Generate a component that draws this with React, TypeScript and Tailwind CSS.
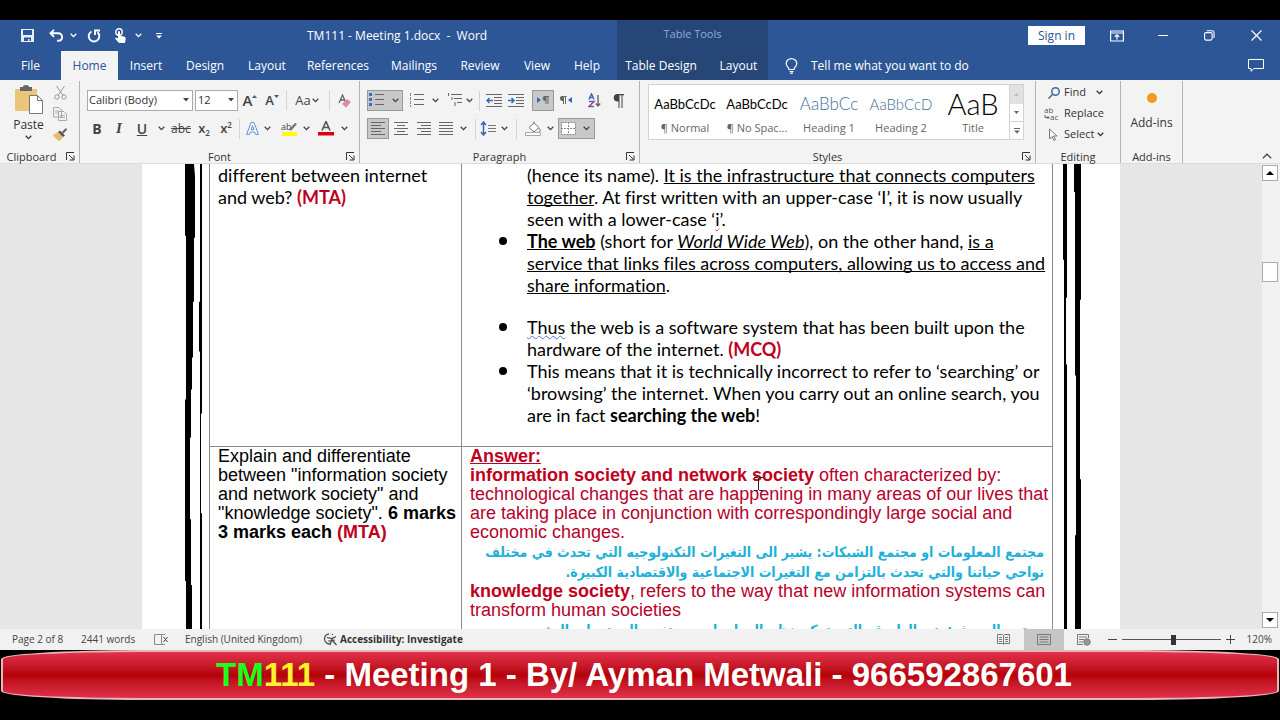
import type { ReactNode } from 'react';
import clsx from 'clsx';

const leftTabs = [
    { name: 'File', width: 'w-[61px]' },
    { name: 'Home', width: 'w-[57px]' },
    { name: 'Insert', width: 'w-14' },
    { name: 'Design', width: 'w-[62px]' },
    { name: 'Layout', width: 'w-[62px]' },
    { name: 'References', width: 'w-20' },
    { name: 'Mailings', width: 'w-[72px]' },
    { name: 'Review', width: 'w-15' },
    { name: 'View', width: 'w-[54px]' },
    { name: 'Help', width: 'w-[46px]' },
];

const styleItems = [
    { name: '¶ Normal', sample: 'AaBbCcDc', look: 'font-[Lato] text-[13px] text-black' },
    { name: '¶ No Spac...', sample: 'AaBbCcDc', look: 'font-[Lato] text-[13px] text-black' },
    { name: 'Heading 1', sample: 'AaBbCc', look: 'font-[Lato] font-light text-[17px] text-[#3f7099]' },
    { name: 'Heading 2', sample: 'AaBbCcD', look: 'font-[Lato] font-light text-[15px] text-[#3f7099]' },
    { name: 'Title', sample: 'AaB', look: 'font-[Lato] font-light text-[29px] text-black' },
];

function Chevron({ className = 'w-3' }: { className?: string }) {
    return (
        <span className={clsx('flex shrink-0 items-center justify-center', className)}>
            <svg width="7" height="5" viewBox="0 0 7 5" fill="none" stroke="currentColor" strokeWidth="1.3">
                <path d="M.7.8 3.5 3.6 6.3.8" />
            </svg>
        </span>
    );
}

function Caret() {
    return (
        <svg className="pointer-events-none absolute top-2 right-1" width="6" height="4" viewBox="0 0 6 4">
            <path d="M0 0h6L3 3.5z" fill="#444" />
        </svg>
    );
}

function Divider({ className }: { className?: string }) {
    return <span className={clsx('h-5 w-px shrink-0 bg-[#d4d4d4]', className)} />;
}

function Tool({ label, className, children }: { label: string; className?: string; children: ReactNode }) {
    return (
        <button type="button" aria-label={label} className={clsx('flex h-[21px] shrink-0 items-center justify-center', className)}>
            {children}
        </button>
    );
}

function Group({ title, launcher, className, children }: { title: string; launcher?: boolean; className?: string; children: ReactNode }) {
    return (
        <section className={clsx('relative flex shrink-0 flex-col border-r border-[#b4b4b4]', className)}>
            <div className="h-[70px] pt-0.5">{children}</div>
            <div className="text-center text-[11px] leading-3 text-[#333]">{title}</div>
            {launcher && (
                <button type="button" aria-label={`${title} settings`} className="absolute right-1 bottom-0.5">
                    <svg width="9" height="9" viewBox="0 0 9 9" fill="none" stroke="#333">
                        <path d="M.5 8V.5H8M3 3l4.5 4.5M8 3.500V8H3.500" />
                    </svg>
                </button>
            )}
        </section>
    );
}

// Horizontal rules used by the list and alignment icons: [x1, x2] per row
function Lines({ rows, step = 3, children, color = '#666' }: { rows: number[][]; step?: number; children?: ReactNode; color?: string }) {
    return (
        <svg width="16" height="16" viewBox="0 0 16 16" fill="none" stroke={color}>
            {rows.map(([a, b], i) => (
                <path key={i} d={`M${a} ${1.5 + i * step}H${b}`} />
            ))}
            {children}
        </svg>
    );
}

function TitleColumn() {
    return (
        <div className="flex w-[617px] shrink-0 flex-col">
            <div className="flex h-[31px] items-center">
                <div className="flex w-[307px] shrink-0 items-center pl-[21px]">
                    <button type="button" aria-label="Save" className="w-[28px]">
                        <svg width="13" height="13" viewBox="0 0 13 13">
                            <path d="M0 0h13v13H0z" fill="#e8eef7" />
                            <path d="M2 1h9v5H2zM3 8.500h7V12H8.500V10H7v2H3z" fill="#2c5696" />
                        </svg>
                    </button>
                    <button type="button" aria-label="Undo" className="w-4">
                        <svg width="15" height="13" viewBox="0 0 15 13" fill="none" stroke="#fff" strokeWidth="1.900">
                            <path d="M5 .8 1.500 4.300 5 7.800M1.500 4.300H9c5.500 0 5.500 7.500 0 7.500H8" />
                        </svg>
                    </button>
                    <Chevron className="w-4 text-white" />
                    <button type="button" aria-label="Redo" className="ml-1.5 w-[27px]">
                        <svg width="14" height="14" viewBox="0 0 14 14" fill="none" stroke="#fff" strokeWidth="1.900">
                            <path d="M4.500 2.500a5.300 5.300 0 1 0 6 .7M8 6V1.500h5" />
                        </svg>
                    </button>
                    <button type="button" aria-label="Touch mode" className="w-4">
                        <svg width="13" height="15" viewBox="0 0 13 15">
                            <circle cx="5" cy="4" r="3.200" fill="none" stroke="#fff" strokeWidth="1.400" />
                            <path d="M4 3.500q1-1.200 2 0v4l4.500 1.200q1.500.5 1.200 2L11 15H5L1 10.500q.5-1.500 3 0z" fill="#fff" />
                        </svg>
                    </button>
                    <Chevron className="w-4 text-white" />
                    <button type="button" aria-label="Customize toolbar" className="ml-2.5 text-white">
                        <svg width="6" height="6" viewBox="0 0 6 6" fill="currentColor">
                            <path d="M0 0h6v1H0zM0 2.500h6L3 5.500z" />
                        </svg>
                    </button>
                </div>
                <h1 className="whitespace-pre text-xs text-white">{'TM111 - Meeting 1.docx  -  Word'}</h1>
            </div>
            <nav className="flex h-[29px]">
                {leftTabs.map((tab) => (
                    <button
                        key={tab.name}
                        type="button"
                        className={clsx(
                            'flex shrink-0 items-center justify-center text-xs font-medium',
                            tab.width,
                            tab.name === 'Home' ? 'bg-[#f3f3f3] text-[#2c5696]' : 'text-white'
                        )}
                    >
                        {tab.name}
                    </button>
                ))}
            </nav>
        </div>
    );
}

function Header() {
    return (
        <header className="flex h-[60px] shrink-0 bg-[#2c5696]">
            <TitleColumn />
            <div className="flex w-[151px] shrink-0 flex-col bg-[#254677]">
                <div className="h-[31px] text-center text-[11px] leading-7 text-[#93add2]">Table Tools</div>
                <div className="flex h-[29px] text-xs font-medium whitespace-nowrap text-white">
                    <button type="button" className="w-[88px]">Table Design</button>
                    <button type="button" className="flex-1 pl-1">Layout</button>
                </div>
            </div>
            <div className="flex flex-1 flex-col">
                <div className="flex h-[31px] items-center justify-end text-white">
                    <button type="button" className="mr-[25px] h-[19px] w-[57px] bg-white text-xs leading-[19px] text-[#2c5696]">Sign in</button>
                    <button type="button" aria-label="Ribbon display options" className="mr-[34px]">
                        <svg width="14" height="12" viewBox="0 0 14 12" fill="none" stroke="#fff" strokeWidth="1.200">
                            <path d="M.6 1h12.800v10H.6zM.6 3h12.800M7 9.500V5M4.800 6.800 7 4.800l2.200 2" />
                        </svg>
                    </button>
                    <button type="button" aria-label="Minimize" className="mr-9">
                        <svg width="10" height="10" viewBox="0 0 10 10" stroke="#fff"><path d="M0 4.500h10" /></svg>
                    </button>
                    <button type="button" aria-label="Restore" className="mr-9">
                        <svg width="11" height="11" viewBox="0 0 11 11" fill="none" stroke="#fff" strokeWidth="1.100">
                            <rect x=".6" y="2.600" width="7.500" height="7.500" rx="1.500" />
                            <path d="M2.800.8h5.200q2 0 2 2V8" />
                        </svg>
                    </button>
                    <button type="button" aria-label="Close" className="mr-[18px]">
                        <svg width="11" height="11" viewBox="0 0 11 11" stroke="#fff" strokeWidth="1.200"><path d="m.5.5 10 10m0-10-10 10" /></svg>
                    </button>
                </div>
                <div className="flex h-[29px] items-center pl-[17px] text-white">
                    <svg width="13" height="16" viewBox="0 0 13 16" fill="none" stroke="#fff" strokeWidth="1.200">
                        <path d="M4 11.500C4 9 1.200 8.500 1.200 5.500a5.300 4.900 0 0 1 10.600 0C11.800 8.500 9 9 9 11.500zM4.500 13.500h4M5 15.200h3" />
                    </svg>
                    <button type="button" className="ml-[13px] text-xs">Tell me what you want to do</button>
                    <button type="button" aria-label="Comments" className="mr-4 ml-auto">
                        <svg width="16" height="13" viewBox="0 0 16 13" fill="none" stroke="#fff">
                            <path d="M.5.5h15v9H6l-3 2.800V9.500H.5z" />
                        </svg>
                    </button>
                </div>
            </div>
        </header>
    );
}

function ClipboardGroup() {
    return (
        <Group title="Clipboard" launcher className="w-20 [&>div]:pr-4">
            <div className="flex">
                <button type="button" className="flex w-[53px] flex-col items-center pt-0.5 pl-1 text-xs text-[#333]">
                    <svg width="28" height="30" viewBox="0 0 28 30">
                        <path d="M0 4h22v22H0z" fill="#ecc678" />
                        <path d="M5 2h3q0-2 3-2t3 2h3v4H5z" fill="#666" />
                        <path d="M14.500 10.500h8l5 5v13h-13z" fill="#fff" stroke="#777" />
                        <path d="M22.500 10.500v5h5" fill="none" stroke="#777" />
                    </svg>
                    <span className="leading-5">Paste</span>
                    <Chevron />
                </button>
                <div className="-mr-3 -mt-px flex flex-col">
                    <Tool label="Cut">
                        <svg width="13" height="14" viewBox="0 0 13 14" fill="none" stroke="#999">
                            <path d="M2.500 0 9 9.500M10.500 0 4 9.500" />
                            <circle cx="3" cy="11" r="2.200" />
                            <circle cx="10" cy="11" r="2.200" />
                        </svg>
                    </Tool>
                    <Tool label="Copy">
                        <svg width="14" height="14" viewBox="0 0 14 14" fill="#f3f3f3" stroke="#aaa">
                            <path d="M.5.500H6L8.500 3v7h-8zM5.500 4.500H11L13.500 7v6.500h-8zM2 4h4M2 6h3M7 8.500h5M7 10.500h5" />
                        </svg>
                    </Tool>
                    <Tool label="Format painter">
                        <svg width="14" height="13" viewBox="0 0 14 13">
                            <path d="m0 7 5-3 5 5-3 4Q3 12 0 7z" fill="#e5bd6e" />
                            <path d="m5 4 2-1.500 5 5L10 9zM9 4l4-4 1 1.500-3.500 4z" fill="#555" />
                        </svg>
                    </Tool>
                </div>
            </div>
        </Group>
    );
}

function FontGroup() {
    return (
        <Group title="Font" launcher className="w-70">
            <div className="flex h-[35px] items-center pl-[7px] text-[#444]">
                <div className="relative mr-0.5">
                    <select aria-label="Font" className="block h-[21px] w-[106px] appearance-none border border-[#ababab] bg-white pl-px text-[11px] text-[#333]">
                        <option>Calibri (Body)</option>
                    </select>
                    <Caret />
                </div>
                <div className="relative">
                    <select aria-label="Font size" className="block h-[21px] w-[43px] appearance-none border border-[#ababab] bg-white pl-0.5 text-[11px] text-[#333]">
                        <option>12</option>
                    </select>
                    <Caret />
                </div>
                <Tool label="Grow font" className="w-6 text-[15px] font-semibold">
                    A<svg className="mb-2" width="5" height="4" viewBox="0 0 5 4"><path d="m0 3 2.500-3L5 3z" fill="#35618e" /></svg>
                </Tool>
                <Tool label="Shrink font" className="w-5 text-[13px] font-semibold">
                    A<svg className="mb-2" width="5" height="4" viewBox="0 0 5 4"><path d="m0 0 2.500 3L5 0z" fill="#35618e" /></svg>
                </Tool>
                <Divider className="ml-1" />
                <Tool label="Change case" className="ml-1 w-[34px] text-[13px]">Aa<Chevron className="w-2.5" /></Tool>
                <Divider className="mx-1" />
                <Tool label="Clear formatting" className="w-5">
                    <svg width="13" height="14" viewBox="0 0 13 14">
                        <path d="M1 9 4.500 1 8 9M2.500 6h4" fill="none" stroke="#666" strokeWidth="1.300" />
                        <path d="m4 10 5-5 4 3-5 5.500z" fill="#e0889c" />
                    </svg>
                </Tool>
            </div>
            <div className="flex h-[21px] items-center pl-1.5 text-[#444]">
                <Tool label="Bold" className="w-[22px] text-sm font-bold">B</Tool>
                <Tool label="Italic" className="w-[22px] font-['Liberation_Serif'] text-[15px] font-semibold italic">I</Tool>
                <Tool label="Underline" className="w-6 text-sm font-semibold underline">U</Tool>
                <Chevron className="mx-1" />
                <Tool label="Strikethrough" className="w-6 text-xs line-through">abc</Tool>
                <Tool label="Subscript" className="w-[22px] text-[13px] font-semibold">x<span className="mt-2 text-[8px]">2</span></Tool>
                <Tool label="Superscript" className="w-[22px] text-[13px] font-semibold">x<span className="mb-2 text-[8px]">2</span></Tool>
                <Divider className="ml-0.5" />
                <Tool label="Text effects" className="w-6">
                    <svg width="13" height="13" viewBox="0 0 13 13" fill="#fff" stroke="#5b8fd0" strokeLinejoin="round">
                        <path d="M5 .6h3l4.400 11.800H9.600L8.700 10H4.300l-.9 2.400H.6zM6.500 3.500 5 7.700h3z" />
                    </svg>
                </Tool>
                <Chevron className="mr-1" />
                <Tool label="Highlight" className="w-7">
                    <svg width="17" height="17" viewBox="0 0 17 17">
                        <path d="M1 12h15v4H1z" fill="#ff0" />
                        <text x="0" y="10" fontSize="9" fill="#444">ab</text>
                        <path d="m8 9 6-6 2 1-6 7z" fill="#777" />
                    </svg>
                </Tool>
                <Chevron className="mr-1" />
                <Tool label="Font color" className="w-6">
                    <svg width="16" height="15" viewBox="0 0 16 15">
                        <path d="M4 9.500 8 .5l4 9M5.500 6.500h5" fill="none" stroke="#555" strokeWidth="1.600" />
                        <path d="M0 11h16v3.500H0z" fill="#d8000c" />
                    </svg>
                </Tool>
                <Chevron />
            </div>
        </Group>
    );
}

function ParagraphGroup() {
    const pressed = 'border border-[#999] bg-[#c8c8c8]';
    return (
        <Group title="Paragraph" launcher className="w-70">
            <div className="flex h-[35px] items-center pl-[7px] text-[#444]">
                <Tool label="Bullets" className={clsx('w-9', pressed)}>
                    <Lines step={5} rows={[[6, 15], [6, 15], [6, 15]]}>
                        <path d="M0 1.500h3M0 6.500h3M0 11.500h3" stroke="#3b6fb0" strokeWidth="3" />
                    </Lines>
                    <Chevron className="ml-1 w-3" />
                </Tool>
                <Tool label="Numbering" className="ml-1 w-9">
                    <Lines step={5} rows={[[5, 15], [5, 15], [5, 15]]}>
                        <path d="M1.500 0v14" stroke="#888" strokeDasharray="3 1" />
                    </Lines>
                    <Chevron className="ml-1 w-3" />
                </Tool>
                <Tool label="Multilevel list" className="w-9">
                    <Lines step={4} rows={[[4, 15], [7, 15], [10, 15]]}>
                        <path d="M1.500 0v3M5 4v3M8 9v4" />
                    </Lines>
                    <Chevron className="w-3" />
                </Tool>
                <Divider />
                <Tool label="Decrease indent" className="ml-1.5 w-4">
                    <Lines rows={[[0, 16], [8, 16], [8, 16], [8, 16], [0, 16]]}>
                        <path d="M7 7.500H1M3.500 5 1 7.500 3.500 10" stroke="#2f6cb3" strokeWidth="1.500" />
                    </Lines>
                </Tool>
                <Tool label="Increase indent" className="ml-1.5 w-4">
                    <Lines rows={[[0, 16], [8, 16], [8, 16], [8, 16], [0, 16]]}>
                        <path d="M0 7.500h6M3.500 5 6 7.500 3.500 10" stroke="#2f6cb3" strokeWidth="1.500" />
                    </Lines>
                </Tool>
                <Tool label="Left to right" className={clsx('ml-2 w-[22px]', pressed)}>
                    <svg width="12" height="9" viewBox="0 0 12 9">
                        <path d="M0 1v6l4-3z" fill="#2f6cb3" />
                        <path d="M8 0h4v1h-.5v7h-1V1H9.500v7h-1V5a2.500 2.500 0 0 1-.5-5" fill="#666" />
                    </svg>
                </Tool>
                <Tool label="Right to left" className="ml-0.5 w-5">
                    <svg width="12" height="9" viewBox="0 0 12 9">
                        <path d="M12 1v6L8 4z" fill="#2f6cb3" />
                        <path d="M2 0h4.500v1H6v7H5V1H4v7H3V5a2.500 2.500 0 0 1-1-5" fill="#666" />
                    </svg>
                </Tool>
                <Tool label="Sort" className="ml-2 w-5">
                    <svg width="13" height="15" viewBox="0 0 13 15" fill="none" strokeWidth="1.400">
                        <path d="M1 6.500 3.500.8 6 6.500M2 4.500h3" stroke="#2f6cb3" />
                        <path d="M1 8.500h5l-5 5h5" stroke="#8a45a8" />
                        <path d="M10 2v11M7.800 10.500 10 13l2.200-2.500" stroke="#666" />
                    </svg>
                </Tool>
                <Tool label="Show marks" className="ml-1 w-5">
                    <svg width="11" height="14" viewBox="0 0 11 14" fill="#444">
                        <path d="M4.500 0H11v1.200H9.500V14h-1V1.200h-2V14h-1V7.500h-1a3.700 3.700 0 0 1 0-7.500" />
                    </svg>
                </Tool>
            </div>
            <div className="flex h-[21px] items-center pl-[7px] text-[#444]">
                <Tool label="Align left" className={clsx('w-[22px]', pressed)}>
                    <Lines rows={[[1, 15], [1, 11], [1, 15], [1, 11], [1, 15]]} />
                </Tool>
                <Tool label="Center" className="w-6">
                    <Lines rows={[[1, 15], [4, 12], [1, 15], [4, 12], [1, 15]]} />
                </Tool>
                <Tool label="Align right" className="w-[22px]">
                    <Lines rows={[[1, 15], [5, 15], [1, 15], [5, 15], [1, 15]]} />
                </Tool>
                <Tool label="Justify" className="w-[22px]">
                    <Lines rows={[[1, 15], [1, 15], [1, 15], [1, 15], [1, 15]]} />
                </Tool>
                <Chevron />
                <Divider className="ml-1.5" />
                <Tool label="Line spacing" className="ml-0.5 w-5">
                    <svg width="16" height="15" viewBox="0 0 16 15" fill="none">
                        <path d="M3.500 1v13M1 4l2.500-3L6 4M1 11l2.500 3L6 11" stroke="#2f6cb3" strokeWidth="1.500" />
                        <path d="M8 4.500h8M8 7.500h8M8 10.500h8" stroke="#777" />
                    </svg>
                </Tool>
                <Chevron />
                <Divider className="ml-1.5" />
                <Tool label="Shading" className="ml-1.5 w-5">
                    <svg width="17" height="15" viewBox="0 0 17 15" fill="#fff" stroke="#777">
                        <path d="M4 6.500 9 2l5 4.500-5 4.500zM9 2V.5M13.500 7q3 1.500 1 4" />
                        <path d="M.5 11.500h15v3H.5z" stroke="#aaa" />
                    </svg>
                </Tool>
                <Chevron className="mx-1" />
                <Tool label="Borders" className={clsx('w-[37px]', pressed)}>
                    <svg width="15" height="13" viewBox="0 0 15 13" fill="#fff" stroke="#888">
                        <rect x=".5" y=".5" width="14" height="12" strokeDasharray="2 1" />
                        <path d="M7.500 0v13M0 6.500h15" strokeDasharray="2 1" />
                    </svg>
                    <Chevron className="ml-1 w-3" />
                </Tool>
            </div>
        </Group>
    );
}

function StylesGroup() {
    return (
        <Group title="Styles" launcher className="w-99 [&>div]:pr-5">
            <div className="mt-px ml-2 flex h-14 w-[376px] border border-[#d2d2d2] bg-white">
                {styleItems.map((item) => (
                    <button key={item.name} type="button" className="w-18 shrink-0 overflow-hidden px-1">
                        <span className={clsx('flex h-8 items-center justify-center overflow-hidden pt-1 leading-7', item.look)}>{item.sample}</span>
                        <span className="block h-5 text-[11px] leading-5 whitespace-nowrap text-[#666]">{item.name}</span>
                    </button>
                ))}
                <div className="ml-auto flex w-3.5 shrink-0 flex-col border-l border-[#d2d2d2] text-[#666]">
                    <button type="button" aria-label="Previous styles" className="flex h-[19px] items-center justify-center bg-[#e1e1e1]">
                        <svg width="5" height="3" viewBox="0 0 5 3"><path d="m0 3 2.500-3L5 3z" fill="#bbb" /></svg>
                    </button>
                    <button type="button" aria-label="Next styles" className="flex h-[18px] items-center justify-center border-b border-[#d2d2d2]">
                        <svg width="5" height="3" viewBox="0 0 5 3"><path d="m0 0 2.500 3L5 0z" fill="currentColor" /></svg>
                    </button>
                    <button type="button" aria-label="All styles" className="flex flex-1 items-center justify-center">
                        <svg width="6" height="6" viewBox="0 0 6 6"><path d="M0 0h6v1H0zM0 2.500h6L3 5.500z" fill="currentColor" /></svg>
                    </button>
                </div>
            </div>
        </Group>
    );
}

function Ribbon() {
    return (
        <div className="flex h-[84px] shrink-0 border-b border-[#dcdcdc] bg-[#f3f3f3] pt-px">
            <ClipboardGroup />
            <FontGroup />
            <ParagraphGroup />
            <StylesGroup />
            <Group title="Editing" className="w-[85px]">
                <div className="-mt-px flex flex-col pl-3 text-[11px] text-[#333]">
                    <button type="button" className="flex h-[21px] items-center">
                        <svg width="12" height="12" viewBox="0 0 12 12" fill="none" stroke="#41699c" strokeWidth="1.500">
                            <circle cx="7.500" cy="4.500" r="3.700" />
                            <path d="M5 7 .5 11.500" />
                        </svg>
                        <span className="ml-1">Find</span>
                        <Chevron className="ml-2 w-3" />
                    </button>
                    <button type="button" className="flex h-[21px] items-center">
                        <svg className="-ml-1" width="16" height="18" viewBox="0 0 16 18">
                            <text x="0" y="8" fontSize="8" fill="#555">ab</text>
                            <text x="6" y="15" fontSize="8" fill="#555">ac</text>
                            <path d="M1 10v2.500h4M3.500 11 5 12.500 3.500 14" fill="none" stroke="#41699c" />
                        </svg>
                        <span className="ml-1">Replace</span>
                    </button>
                    <button type="button" className="flex h-[21px] items-center">
                        <svg width="12" height="13" viewBox="0 0 12 13" fill="#fff" stroke="#777">
                            <path d="M1.500 1v10L4 8.500l2 4 1.500-.8-2-3.700H9z" />
                        </svg>
                        <span className="ml-1">Select</span>
                        <Chevron />
                    </button>
                </div>
            </Group>
            <Group title="Add-ins" className="w-[62px]">
                <button type="button" className="flex w-full flex-col items-center pt-2.5 text-xs text-[#333]">
                    <span className="h-2.5 w-2.5 rounded-full bg-[#f09a1a]" />
                    <span className="mt-2.5 leading-5">Add-ins</span>
                </button>
            </Group>
            <button type="button" aria-label="Collapse the ribbon" className="mt-auto mr-2 mb-1 ml-auto">
                <svg width="10" height="6" viewBox="0 0 10 6" fill="none" stroke="#444" strokeWidth="1.200"><path d="m.8 5.200 4.200-4 4.200 4" /></svg>
            </button>
        </div>
    );
}

// Hand-drawn looking page border: one thick stroke and one thin stroke
function PageEdge({ flip, className }: { flip?: boolean; className: string }) {
    return (
        <svg className={clsx('absolute top-0 h-full w-5', className)} viewBox="0 0 20 466" preserveAspectRatio="none" aria-hidden="true">
            {flip ? (
                <path d="M3 0h3v134h-1v67h1v265H3V96H2V0zM13 0h8v24h-1v112h-1v180h1v150h-6V372h1V212h-1V28h-1z" />
            ) : (
                <path d="M2 0h8l1 12v62h-1v64h-1v56H8v32H7v48H6v82h1v66h1v44H2v-48H1v-36-146h1V72H1V0zM16 0h2v250h-1v100h1v116h-2V188h-1v-50h1z" />
            )}
        </svg>
    );
}

function BulletItem({ className, children }: { className?: string; children: ReactNode }) {
    return (
        <li className={clsx('flex', className)}>
            <span className="mt-[7px] mr-5 ml-[5px] h-2 w-2 shrink-0 rounded-full bg-black" />
            <p>{children}</p>
        </li>
    );
}

function DocTable() {
    return (
        <table className="mx-auto w-[844px] table-fixed border-collapse text-black [text-decoration-skip-ink:none]">
            <colgroup>
                <col className="w-[252px]" />
                <col />
            </colgroup>
            <tbody className="align-top whitespace-nowrap">
                <tr className="font-[Lato] text-[18px] leading-[22px] [font-variant-ligatures:none]">
                    <td className="border border-t-0 border-[#8a8a8a] px-2">
                        different between internet<br />and web? <b className="text-[#c00020]">(MTA)</b>
                    </td>
                    <td className="border border-t-0 border-[#8a8a8a] pr-0 pb-5 pl-8">
                        <p className="pl-[33px]">
                            (hence its name). <u>It is the infrastructure that connects computers</u><br />
                            <u>together</u>. At first written with an upper-case ‘I’, it is now usually<br />
                            seen with a lower-case ‘<span className="underline decoration-[#d04050] decoration-wavy decoration-1">i</span>’.
                        </p>
                        <ul>
                            <BulletItem>
                                <b><u>The web</u></b> (short for <i><u>World Wide Web</u></i>), on the other hand, <u>is a</u><br />
                                <u>service that links files across computers, allowing us to access and</u><br />
                                <u>share information</u>.
                            </BulletItem>
                            <BulletItem className="mt-5">
                                <span className="underline decoration-[#5a7ad0] decoration-wavy decoration-1">Thus</span> the web is a software system that has been built upon the<br />
                                hardware of the internet. <b className="text-[#c00020]">(MCQ)</b>
                            </BulletItem>
                            <BulletItem>
                                This means that it is technically incorrect to refer to ‘searching’ or<br />
                                ‘browsing’ the internet. When you carry out an online search, you<br />
                                are in fact <b>searching the web</b>!
                            </BulletItem>
                        </ul>
                    </td>
                </tr>
                <tr className="font-['Liberation_Sans'] text-[18px] leading-[19px]">
                    <td className="border border-[#8a8a8a] px-2">
                        Explain and differentiate<br />
                        between "information society<br />
                        and network society" and<br />
                        "knowledge society". <b>6 marks</b><br />
                        <b>3 marks each <span className="text-[#c00020]">(MTA)</span></b>
                    </td>
                    <td className="border border-[#8a8a8a] px-2 text-[#b8002c]">
                        <p><b className="text-[#c00020] underline">Answer:</b></p>
                        <p>
                            <b className="text-[#c00020]">information society and network society</b> often characterized by:<br />
                            technological changes that are happening in many areas of our lives that<br />
                            are taking place in conjunction with correspondingly large social and<br />
                            economic changes.
                        </p>
                        <p dir="rtl" className="font-['DejaVu_Sans_Condensed','DejaVu_Sans'] text-[14px] leading-5 font-bold text-[#22b0d8]">
                            مجتمع المعلومات او مجتمع الشبكات: يشير الى التغيرات التكنولوجيه التي تحدث في مختلف<br />
                            نواحي حياتنا والتي تحدث بالتزامن مع التغيرات الاجتماعية والاقتصادية الكبيرة.
                        </p>
                        <p>
                            <b className="text-[#c00020]">knowledge society</b>, refers to the way that new information systems can<br />
                            transform human societies
                        </p>
                        <p dir="rtl" className="font-['DejaVu_Sans_Condensed','DejaVu_Sans'] text-[14px] leading-5 font-bold text-[#22b0d8]">
                            مجتمع المعرفه: هي الطريقه التي تمكن نظم المعلومات من تغيير المجتمعات البشريه
                        </p>
                    </td>
                </tr>
            </tbody>
        </table>
    );
}

function Workspace() {
    return (
        <main className="flex min-h-0 flex-1 bg-[#e6e6e6]">
            <div className="min-w-0 flex-1 overflow-hidden">
                <article className="relative mx-auto h-full w-[978px] overflow-hidden bg-white">
                    <PageEdge className="left-[42px]" />
                    <DocTable />
                    <PageEdge flip className="right-[39px]" />
                    <svg className="absolute top-[313px] left-[612px]" width="9" height="14" viewBox="0 0 9 14" fill="none" stroke="#222">
                        <path d="M0 .5h3.500l1 1 1-1H9M4.500 1v12M0 13.500h3.500l1-1 1 1H9" />
                    </svg>
                </article>
            </div>
            <div className="flex w-[18px] shrink-0 flex-col items-start bg-[#f1f1f1] pt-px">
                <button type="button" aria-label="Scroll up" className="flex h-4 w-4 items-center justify-center border border-[#aaa] bg-white">
                    <svg width="8" height="4" viewBox="0 0 8 4"><path d="m0 4 4-4 4 4z" /></svg>
                </button>
                <div className="mt-[81px] h-5 w-4 border border-[#aaa] bg-white" />
                <button type="button" aria-label="Scroll down" className="mt-auto mb-px flex h-4 w-4 items-center justify-center border border-[#aaa] bg-white">
                    <svg width="8" height="4" viewBox="0 0 8 4"><path d="m0 0 4 4 4-4z" /></svg>
                </button>
            </div>
        </main>
    );
}

function StatusBar() {
    return (
        <footer className="flex h-[21px] shrink-0 items-center bg-[#f1f1f1] pr-2 pl-3 text-[10px] whitespace-nowrap text-[#444]">
            <span className="w-[69px]">Page 2 of 8</span>
            <span className="w-[73px]">2441 words</span>
            <svg className="mr-4" width="15" height="12" viewBox="0 0 15 12" fill="none" stroke="#888">
                <path d="M.5.5h7v10h-7zM7.500.5H11M7.500 10.500H11" />
                <path d="m9.500 3 4 5m0-5-4 5" stroke="#444" />
            </svg>
            <span className="w-[138px]">English (United Kingdom)</span>
            <svg className="mr-[3px]" width="14" height="13" viewBox="0 0 14 13" fill="none" stroke="#444" strokeWidth="1.200">
                <path d="M6 .8a5 5 0 1 0 1 10M9.500 1v1M4 4.500l5 1 4-2M9 5.500 7 12M9 7l4.500 5M5 8l7-1" />
            </svg>
            <span className="font-bold text-[#333]">Accessibility: Investigate</span>
            <div className="ml-auto flex items-center self-stretch">
                <button type="button" aria-label="Read mode" className="mr-3.5">
                    <svg width="13" height="11" viewBox="0 0 13 11" fill="none" stroke="#777">
                        <path d="M.5.500h5l1 1 1-1h5v9h-5l-1 1-1-1h-5zM6.500 1v9M2 3.500h3M2 5.500h3M2 7.500h3M8 3.500h3M8 5.500h3M8 7.500h3" />
                    </svg>
                </button>
                <button type="button" aria-label="Print layout" className="flex w-10 items-center justify-center self-stretch bg-[#c6c6c6]">
                    <svg width="14" height="11" viewBox="0 0 14 11" fill="none" stroke="#777">
                        <path d="M.5.500h13v10H.5zM2.500 3h9M2.500 5.500h9M2.500 8h9" />
                    </svg>
                </button>
                <button type="button" aria-label="Web layout" className="ml-[13px]">
                    <svg width="14" height="12" viewBox="0 0 14 12" fill="none" stroke="#777">
                        <path d="M6 10.500H.5V.5h11V4M2 3h8M2 5.500h5M2 8h4" />
                        <circle cx="10" cy="8" r="3.200" fill="#999" />
                    </svg>
                </button>
                <button type="button" aria-label="Zoom out" className="ml-[17px]">
                    <svg width="9" height="9" viewBox="0 0 9 9" stroke="#444"><path d="M0 4.500h9" /></svg>
                </button>
                <input
                    type="range"
                    aria-label="Zoom"
                    min={10}
                    max={200}
                    defaultValue={110}
                    className="mx-[5px] h-3 w-[99px] appearance-none bg-[linear-gradient(#555,#555)] bg-size-[100%_1px] bg-center bg-no-repeat [&::-webkit-slider-thumb]:h-[10px] [&::-webkit-slider-thumb]:w-[5px] [&::-webkit-slider-thumb]:appearance-none [&::-webkit-slider-thumb]:bg-[#333]"
                />
                <button type="button" aria-label="Zoom in">
                    <svg width="9" height="9" viewBox="0 0 9 9" stroke="#444"><path d="M0 4.500h9M4.500 0v9" /></svg>
                </button>
                <span className="ml-3">120%</span>
            </div>
        </footer>
    );
}

export default function App() {
    return (
        <div className="flex h-screen flex-col overflow-hidden bg-black pt-5 font-['Open_Sans',sans-serif]">
            <Header />
            <Ribbon />
            <Workspace />
            <StatusBar />
            <div className="mx-px mb-5 flex h-[50px] shrink-0 items-center justify-center rounded-[140px/9px] border-2 border-[#e9b5bb] bg-linear-to-b from-[#e2304a] via-[#b50006] to-[#e2304a] pl-2 font-['Liberation_Sans'] text-[33px] font-bold text-white">
                <p className="whitespace-pre">
                    <span className="text-[#1cff1c]">TM</span>
                    <span className="text-[#fff32a]">111</span>
                    {' - Meeting 1 - By/ Ayman Metwali - 966592867601'}
                </p>
            </div>
        </div>
    );
}
